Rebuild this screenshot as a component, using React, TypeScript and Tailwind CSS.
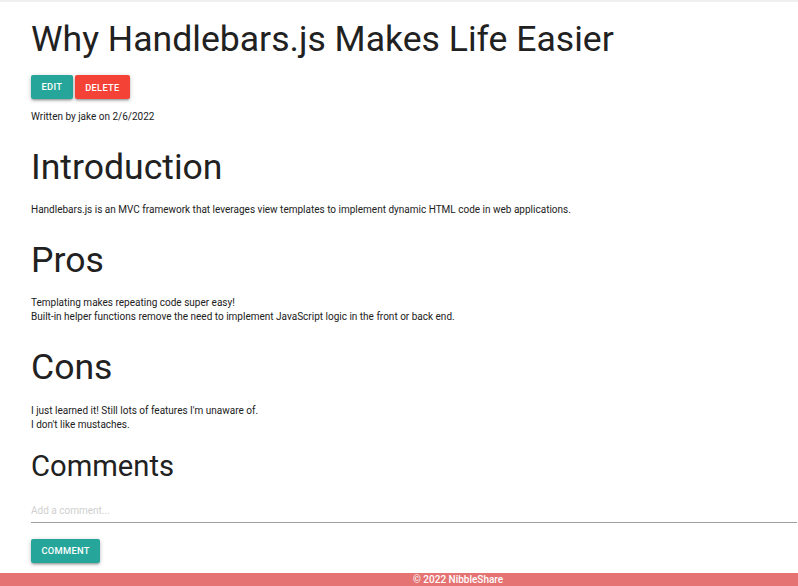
export default function App(): JSX.Element {
    const sections = [
        { title: "Introduction", lines: ["Handlebars.js is an MVC framework that leverages view templates to implement dynamic HTML code in web applications."] },
        { title: "Pros", lines: ["Templating makes repeating code super easy!", "Built-in helper functions remove the need to implement JavaScript logic in the front or back end."] },
        { title: "Cons", lines: ["I just learned it! Still lots of features I'm unaware of.", "I don't like mustaches."] },
    ];

    return (
        <div className="min-h-[586px] w-[798px] overflow-hidden bg-white text-[#212121] flex flex-col" style={{ fontFamily: "Roboto, 'Liberation Sans', sans-serif" }}>
            <div className="h-[2px] bg-[#efefef]" />
            <main className="flex-1 pl-[31px] pr-px">
                <h2 className="mt-[18px] text-[35.6px] leading-[1.1]">Why Handlebars.js Makes Life Easier</h2>
                <div className="mt-[16px] flex gap-[2px]">
                    <button className="h-6 rounded-[2px] bg-[#26a69a] px-[10.5px] text-[9.3px] font-medium uppercase tracking-[0.3px] text-white shadow-[0_2px_2px_0_rgba(0,0,0,0.14),0_3px_1px_-2px_rgba(0,0,0,0.12),0_1px_5px_0_rgba(0,0,0,0.2)]">Edit</button>
                    <button className="h-6 rounded-[2px] bg-[#f44336] px-[10.5px] pt-px text-[9.3px] font-medium uppercase tracking-[0.3px] text-white shadow-[0_2px_2px_0_rgba(0,0,0,0.14),0_3px_1px_-2px_rgba(0,0,0,0.12),0_1px_5px_0_rgba(0,0,0,0.2)]">Delete</button>
                </div>
                <p className="mt-[10px] text-[10px] leading-[15px]">Written by jake on 2/6/2022</p>

                {sections.map((section) => (
                    <section key={section.title}>
                        <h2 className="mt-[24px] text-[35.6px] leading-[1.1]">{section.title}</h2>
                        <div className="mt-[16px]">
                            {section.lines.map((line) => (
                                <p key={line} className="text-[10px] leading-[14px]">{line}</p>
                            ))}
                        </div>
                    </section>
                ))}

                <h3 className="mt-[18px] text-[29.2px] leading-[1.1]">Comments</h3>
                <input
                    placeholder="Add a comment..."
                    className="mt-[17px] block h-[24px] w-full border-b border-[#9e9e9e] bg-transparent text-[10px] outline-none placeholder:text-[#d0d0d0]"
                />
                <button className="mt-[16px] h-6 rounded-[2px] bg-[#26a69a] px-[10.5px] text-[9.3px] font-medium uppercase tracking-[0.3px] text-white shadow-[0_2px_2px_0_rgba(0,0,0,0.14),0_3px_1px_-2px_rgba(0,0,0,0.12),0_1px_5px_0_rgba(0,0,0,0.2)]">Comment</button>
            </main>
            <footer className="mt-[8px] h-[13px] bg-[#e57373] pl-[413px] text-[10px] font-medium leading-[13px] text-white">© 2022 NibbleShare</footer>
        </div>
    );
}
